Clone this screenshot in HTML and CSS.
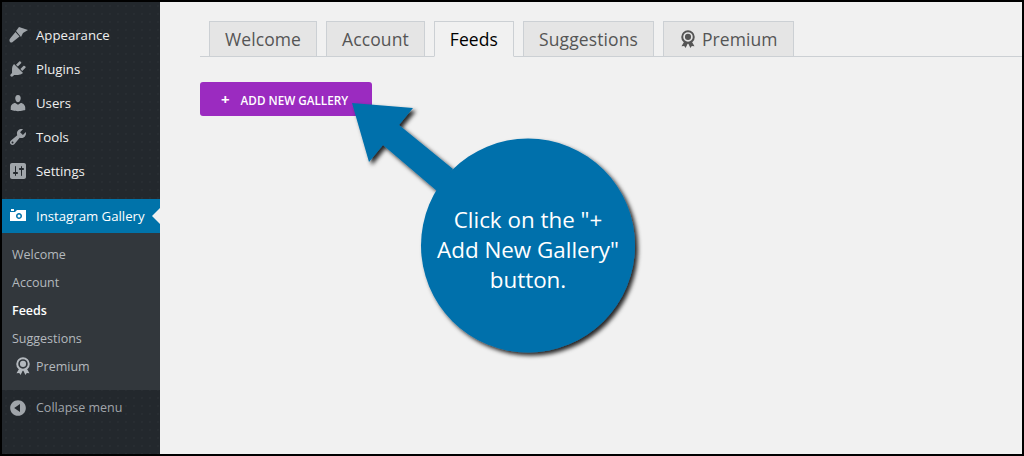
FILE: index.html
```html
<!DOCTYPE html>
<html>
<head>
    <title>Instagram Gallery</title>
    <link rel="stylesheet" href="styles.css">
</head>
<body>
    <div class="frame">
        <div class="sidebar">
            <ul class="menu">
                <li class="menu-item">
                    <svg class="menu-icon" viewBox="0 0 20 20"><path d="M8 6l3-4 9 3-5 3-2 4z"/><path d="M7.500 7l4 4.500L4 17.500q-2 .5-2.500-1.500-.5-1.500 1-3z"/></svg>
                    Appearance
                </li>
                <li class="menu-item">
                    <svg class="menu-icon" viewBox="0 0 20 20"><path d="M13.11 4.36L9.87 7.6 8 5.73l3.24-3.24c.35-.34 1.05-.2 1.56.32.52.51.66 1.21.31 1.55zm-8 1.77l.91-1.12 9.01 9.01-1.19.84c-.71.71-2.63 1.16-3.82 1.16H6.14L4.9 17.26c-.59.59-1.54.59-2.12 0-.59-.58-.59-1.53 0-2.12l1.24-1.24v-3.88c0-1.13.4-3.19 1.09-3.89zm7.26 3.97l3.24-3.24c.34-.35 1.04-.21 1.55.31.52.51.66 1.21.31 1.55l-3.24 3.25z"/></svg>
                    Plugins
                </li>
                <li class="menu-item">
                    <svg class="menu-icon" viewBox="0 0 20 20"><path d="M10 9.25c-2.27 0-2.73-3.44-2.73-3.44C7 4.02 7.82 2 9.97 2c2.16 0 2.98 2.02 2.71 3.81 0 0-.41 3.44-2.68 3.44zm0 2.57L12.72 10c2.39 0 4.52 2.33 4.52 4.53v2.49s-3.65 1.13-7.24 1.13c-3.65 0-7.24-1.13-7.24-1.13v-2.49c0-2.25 1.94-4.48 4.47-4.48z"/></svg>
                    Users
                </li>
                <li class="menu-item">
                    <svg class="menu-icon" viewBox="0 0 20 20"><path d="M16.68 9.77c-1.34 1.34-3.3 1.67-4.95.99l-5.41 6.52c-.99.99-2.59.99-3.58 0s-.99-2.59 0-3.57l6.52-5.42c-.68-1.65-.35-3.61.99-4.95 1.28-1.28 3.12-1.62 4.72-1.06l-2.89 2.89 2.82 2.82 2.86-2.87c.53 1.58.18 3.39-1.08 4.65zM3.81 16.21c.4.39 1.04.39 1.43 0 .4-.4.4-1.04 0-1.43-.39-.4-1.03-.4-1.43 0-.39.39-.39 1.03 0 1.43z"/></svg>
                    Tools
                </li>
                <li class="menu-item">
                    <svg class="menu-icon" viewBox="0 0 20 20"><path d="M18 16V4c0-1.1-.9-2-2-2H4c-1.1 0-2 .9-2 2v12c0 1.1.9 2 2 2h12c1.1 0 2-.9 2-2zM8 11h1c.55 0 1 .45 1 1s-.45 1-1 1H8v1.5c0 .28-.22.5-.5.5s-.5-.22-.5-.5V13H6c-.55 0-1-.45-1-1s.45-1 1-1h1V5.5c0-.28.22-.5.5-.5s.5.22.5.5V11zm5-2h-1c-.55 0-1-.45-1-1s.45-1 1-1h1V5.5c0-.28.22-.5.5-.5s.5.22.5.5V7h1c.55 0 1 .45 1 1s-.45 1-1 1h-1v5.5c0 .28-.22.5-.5.5s-.5-.22-.5-.5V9z"/></svg>
                    Settings
                </li>
                <li class="menu-item current">
                    <svg class="menu-icon" viewBox="0 0 20 20"><path fill-rule="evenodd" d="M6 5V3H3v2h3zm12 10V4H9L7 6H2v9h16zm-7-8c1.66 0 3 1.34 3 3s-1.34 3-3 3-3-1.34-3-3 1.34-3 3-3zm0 1.5a1.5 1.5 0 1 0 0 3 1.5 1.5 0 0 0 0-3z"/></svg>
                    Instagram Gallery
                </li>
            </ul>
            <ul class="submenu">
                <li class="sub-item">Welcome</li>
                <li class="sub-item">Account</li>
                <li class="sub-item active">Feeds</li>
                <li class="sub-item">Suggestions</li>
                <li class="sub-item premium">
                    <svg class="ribbon-small" viewBox="0 0 20 20"><use href="#ribbon"/></svg>
                    Premium
                </li>
            </ul>
            <div class="collapse">
                <svg class="menu-icon" viewBox="0 0 20 20"><path d="M10 2.16c4.33 0 7.84 3.51 7.84 7.84s-3.51 7.84-7.84 7.84S2.16 14.33 2.16 10 5.71 2.16 10 2.16zm2 11.72V6.12L6.18 9.97z"/></svg>
                Collapse menu
            </div>
        </div>

        <div class="content">
            <div class="tabs">
                <a class="tab">Welcome</a>
                <a class="tab">Account</a>
                <a class="tab active">Feeds</a>
                <a class="tab">Suggestions</a>
                <a class="tab">
                    <svg class="ribbon" viewBox="0 0 20 20">
                        <symbol id="ribbon" viewBox="0 0 20 20">
                            <path d="M6 12.500L2.800 18l3-.3 1.500 2.300 2.700-5.500zM14 12.500l3.200 5.500-3-.3-1.500 2.300-2.700-5.500z"/>
                            <path fill-rule="evenodd" d="M10 .2a7.500 7.500 0 1 1 0 15 7.500 7.500 0 0 1 0-15zm0 2.200a5.300 5.300 0 1 0 0 10.600 5.300 5.300 0 0 0 0-10.600z"/>
                            <circle cx="10" cy="7.700" r="3.400"/>
                        </symbol>
                        <use href="#ribbon"/>
                    </svg>
                    Premium
                </a>
            </div>
            <button class="add-btn"><span class="plus">+</span> ADD NEW GALLERY</button>
        </div>

        <div class="callout">
            <svg class="callout-shape" viewBox="0 0 310 270">
                <defs>
                    <filter id="shadow" x="-10%" y="-10%" width="125%" height="125%">
                        <feDropShadow dx="3" dy="3" stdDeviation="2" flood-color="#000" flood-opacity="0.85"/>
                    </filter>
                </defs>
                <g fill="#0070ab" filter="url(#shadow)">
                    <polygon points="2,3 63,8 49,25 103,69 87,91 33,45 19,62"/>
                    <circle cx="178" cy="145.500" r="107"/>
                </g>
            </svg>
            <p class="callout-text">Click on the "+<br>Add New Gallery"<br>button.</p>
        </div>
    </div>
</body>
</html>
```

FILE: styles.css
```css
* {
    box-sizing: border-box;
}

body {
    margin: 0;
    font-family: "Open Sans", Arial, sans-serif;
}

ul {
    list-style: none;
    margin: 0;
    padding: 0;
}

.frame {
    position: relative;
    display: flex;
    width: 1024px;
    height: 456px;
    border: 2px solid #000;
    background-color: #f1f1f1;
    overflow: hidden;
}

/* left menu */
.sidebar {
    display: flex;
    flex-direction: column;
    flex: 0 0 158px;
    background-color: #23282d;
    background-image: radial-gradient(rgba(255, 255, 255, 0.025) 0.7px, transparent 1px);
    background-size: 8px 8px;
    font-size: 13.2px;
}

.menu {
    padding-top: 16px;
}

.menu-item {
    position: relative;
    display: flex;
    align-items: center;
    height: 34px;
    color: #eee;
}

.menu-icon {
    flex: none;
    width: 20px;
    height: 20px;
    margin: 0 8px 0 6px;
    fill: #a0a5aa;
}

.menu-item.current {
    margin-top: 11px;
    background-color: #0073aa;
    color: #fff;
}

.menu-item.current .menu-icon {
    fill: #fff;
}

.menu-item.current::after {
    content: "";
    position: absolute;
    right: 0;
    top: 9px;
    border: 8px solid transparent;
    border-right-color: #f1f1f1;
    border-left-width: 0;
}

.submenu {
    padding: 7px 0 10px;
    background-color: #32373c;
    font-size: 12.5px;
}

.sub-item {
    display: flex;
    align-items: center;
    height: 28px;
    padding-left: 10px;
    color: #b4b9be;
}

.sub-item.active {
    color: #fff;
    font-weight: 600;
}

.ribbon-small {
    width: 18px;
    height: 18px;
    margin: 0 4px 0 2px;
    fill: #b4b9be;
}

.collapse {
    display: flex;
    align-items: flex-start;
    flex: 1;
    padding-top: 8px;
    line-height: 20px;
    color: #a0a5aa;
    font-size: 12.5px;
}

/* main area */
.content {
    flex: 1;
    padding: 19px 0 0 40px;
}

.tabs {
    display: flex;
    gap: 9px;
    height: 36px;
    padding-left: 9px;
    border-bottom: 1px solid #ccd0d4;
}

.tab {
    display: flex;
    align-items: center;
    height: 36px;
    padding: 0 15px;
    border: 1px solid #ccd0d4;
    background-color: #e5e5e5;
    color: #555;
    font-size: 17.5px;
    letter-spacing: 0.1px;
}

.tab.active {
    border-bottom-color: #f1f1f1;
    background-color: #f1f1f1;
    color: #000;
}

.ribbon {
    width: 18px;
    height: 18px;
    margin-right: 5px;
    fill: #555;
}

.add-btn {
    display: block;
    width: 172px;
    height: 34px;
    margin-top: 25px;
    padding: 0 0 0 21px;
    border: none;
    border-radius: 3px;
    background-color: #9b2bc0;
    color: #fff;
    font-family: inherit;
    font-size: 11.7px;
    font-weight: 600;
    text-align: left;
}

.plus {
    margin-right: 8px;
    font-size: 15px;
    font-weight: 700;
}

/* arrow and bubble drawn over the page */
.callout {
    position: absolute;
    left: 348px;
    top: 98px;
    width: 310px;
    height: 270px;
}

.callout-shape {
    display: block;
    width: 310px;
    height: 270px;
}

.callout-text {
    position: absolute;
    left: 71px;
    top: 105px;
    width: 214px;
    margin: 0;
    color: #fff;
    font-size: 22.4px;
    line-height: 30px;
    text-align: center;
}
```
